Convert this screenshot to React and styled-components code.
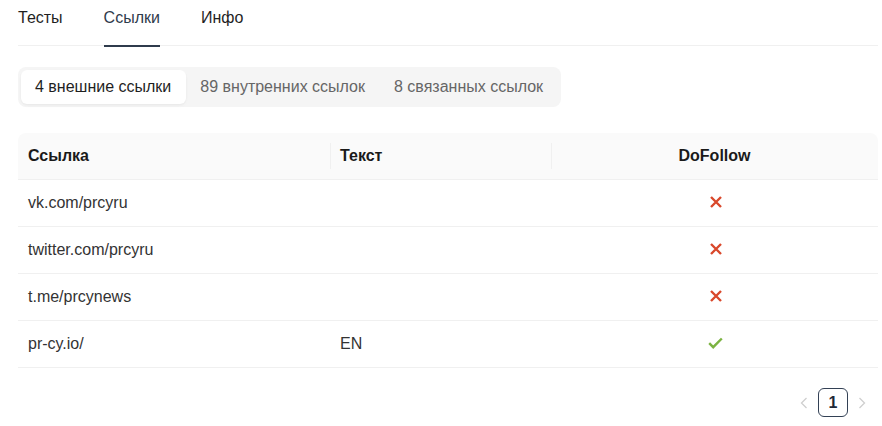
import React from "react";
import styled, { createGlobalStyle } from "styled-components";

const GlobalStyle = createGlobalStyle`
  body {
    margin: 0;
    background: #fff;
    font-family: "Liberation Sans", Arial, sans-serif;
    color: rgba(0, 0, 0, 0.88);
  }
`;

const links = [
  { url: "vk.com/prcyru", text: "", follow: false },
  { url: "twitter.com/prcyru", text: "", follow: false },
  { url: "t.me/prcynews", text: "", follow: false },
  { url: "pr-cy.io/", text: "EN", follow: true },
];

const Cross = () => (
  <svg width="12" height="12" viewBox="0 0 12 12">
    <path d="M1 1 L11 11 M11 1 L1 11" stroke="#d9482b" strokeWidth="2.4" />
  </svg>
);

const Check = () => (
  <svg width="15" height="12" viewBox="0 0 15 12">
    <path d="M1.2 6.2 L5.2 10.2 L13.8 1.5" stroke="#7cb342" strokeWidth="2.4" fill="none" />
  </svg>
);

const Chevron = ({ dir }) => (
  <svg width="8" height="12" viewBox="0 0 8 12">
    <path
      d={dir === "left" ? "M6.5 1 L1.5 6 L6.5 11" : "M1.5 1 L6.5 6 L1.5 11"}
      stroke="#cfcfcf"
      strokeWidth="1.3"
      fill="none"
    />
  </svg>
);

const App = () => {
  return (
    <Page>
      <GlobalStyle />
      <Tabs>
        <Tab>Тесты</Tab>
        <Tab active>Ссылки</Tab>
        <Tab>Инфо</Tab>
      </Tabs>

      <Segmented>
        <SegItem active>4 внешние ссылки</SegItem>
        <SegItem>89 внутренних ссылок</SegItem>
        <SegItem>8 связанных ссылок</SegItem>
      </Segmented>

      <Table>
        <thead>
          <tr>
            <Th width={312}>Ссылка</Th>
            <Th width={221} divider>Текст</Th>
            <Th divider center>DoFollow</Th>
          </tr>
        </thead>
        <tbody>
          {links.map((l) => (
            <tr key={l.url}>
              <Td>{l.url}</Td>
              <Td>{l.text}</Td>
              <Td center>
                <IconBox>{l.follow ? <Check /> : <Cross />}</IconBox>
              </Td>
            </tr>
          ))}
        </tbody>
      </Table>

      <Pagination>
        <Arrow>
          <Chevron dir="left" />
        </Arrow>
        <PageBtn>1</PageBtn>
        <Arrow>
          <Chevron dir="right" />
        </Arrow>
      </Pagination>
    </Page>
  );
};

const Page = styled.div`
  padding: 0 4px 0 18px;
  font-size: 16px;
`;

const Tabs = styled.div`
  display: flex;
  gap: 41px;
  border-bottom: 1px solid #f0f0f0;
  height: 45px;
`;

const Tab = styled.div`
  padding-top: 8px;
  height: 37px;
  font-size: 16px;
  line-height: 20px;
  color: ${(p) => (p.active ? "#2f3b4c" : "#1f1f1f")};
  border-bottom: 2px solid ${(p) => (p.active ? "#2f3b4c" : "transparent")};
  box-sizing: content-box;
  margin-bottom: -1px;
`;

const Segmented = styled.div`
  display: inline-flex;
  margin-top: 21px;
  padding: 3px;
  background: #f5f5f5;
  border-radius: 8px;
`;

const SegItem = styled.div`
  height: 34px;
  line-height: 34px;
  padding: 0 15px 0 14px;
  font-size: 16px;
  border-radius: 6px;
  color: ${(p) => (p.active ? "#1f1f1f" : "#666")};
  background: ${(p) => (p.active ? "#fff" : "transparent")};
  box-shadow: ${(p) =>
    p.active
      ? "0 1px 2px 0 rgba(0,0,0,0.03), 0 1px 6px -1px rgba(0,0,0,0.02), 0 2px 4px 0 rgba(0,0,0,0.02)"
      : "none"};
`;

const Table = styled.table`
  margin-top: 26px;
  width: 860px;
  border-collapse: separate;
  border-spacing: 0;
  table-layout: fixed;
  font-size: 16px;
`;

const Th = styled.th`
  position: relative;
  height: 47px;
  box-sizing: border-box;
  padding: 0 10px;
  background: #fafafa;
  border-bottom: 1px solid #f0f0f0;
  font-weight: 700;
  color: #1a1a1a;
  text-align: ${(p) => (p.center ? "center" : "left")};
  width: ${(p) => (p.width ? `${p.width}px` : "auto")};

  &:first-child {
    border-top-left-radius: 8px;
  }
  &:last-child {
    border-top-right-radius: 8px;
  }
  &::before {
    content: "";
    display: ${(p) => (p.divider ? "block" : "none")};
    position: absolute;
    left: 0;
    top: 50%;
    transform: translateY(-50%);
    width: 1px;
    height: 26px;
    background: #f0f0f0;
  }
`;

const Td = styled.td`
  height: 47px;
  box-sizing: border-box;
  padding: 0 10px;
  border-bottom: 1px solid #f0f0f0;
  color: #333;
  text-align: ${(p) => (p.center ? "center" : "left")};
  vertical-align: middle;
`;

const IconBox = styled.div`
  display: flex;
  justify-content: center;
  align-items: center;
  height: 16px;
  margin-top: -2px;
  padding-left: 2px;
`;

const Pagination = styled.div`
  display: flex;
  justify-content: flex-end;
  align-items: center;
  gap: 6px;
  margin-top: 20px;
  padding-right: 8px;
`;

const Arrow = styled.div`
  width: 16px;
  height: 28px;
  display: flex;
  align-items: center;
  justify-content: center;
`;

const PageBtn = styled.div`
  width: 28px;
  height: 27px;
  line-height: 27px;
  text-align: center;
  border: 1px solid #334155;
  border-radius: 6px;
  font-weight: 700;
  font-size: 16px;
  color: #1f2937;
`;

export default App;
